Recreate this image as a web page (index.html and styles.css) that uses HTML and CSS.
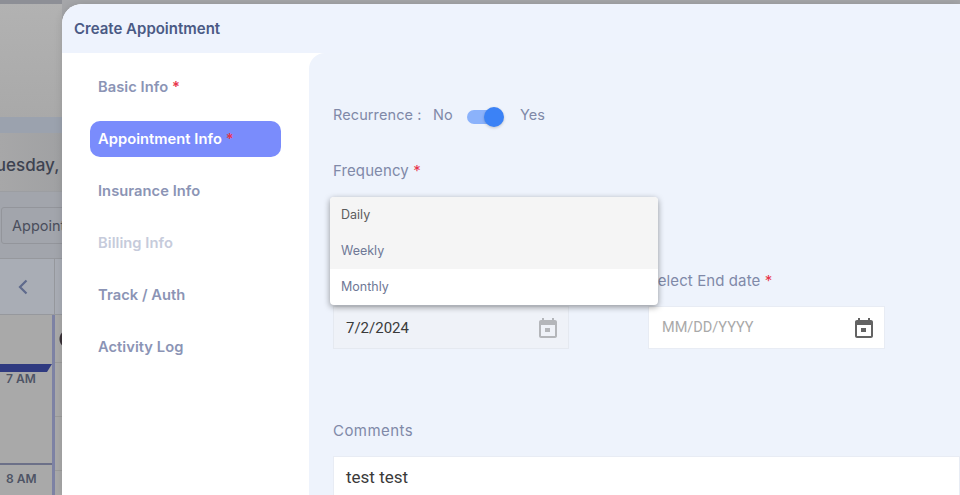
FILE: index.html
```html
<!DOCTYPE html>
<html lang="en">
<head>
<meta charset="utf-8">
<title>Create Appointment</title>
<link rel="stylesheet" href="styles.css">
</head>
<body>
<div class="backdrop">
  <div class="bd-top"></div>
  <div class="bd-band"></div>
  <div class="bd-date">Tuesday, July 2</div>
  <div class="bd-filter"><span class="bd-select">Appointments</span></div>
  <div class="bd-nav">
    <div class="bd-prev">
      <svg class="bd-chevron" width="14" height="18" viewBox="0 0 14 18"><path d="M10.5 2.5 4 9l6.500 6.500" fill="none" stroke="#5f6a8c" stroke-width="2.200"/></svg>
    </div>
  </div>
  <div class="bd-cal">
    <div class="bd-times">
      <div class="bd-head"></div>
      <div class="bd-flag"></div>
      <div class="bd-time bd-time-7">7 AM</div>
      <div class="bd-time bd-time-8">8 AM</div>
    </div>
    <div class="bd-col">
      <div class="bd-avatar"></div>
      <div class="bd-slot"></div>
      <div class="bd-slot"></div>
    </div>
  </div>
</div>

<div class="modal">
  <header class="modal-head">Create Appointment</header>
  <div class="modal-body">
    <nav class="tabs">
      <a class="tab">Basic Info <i class="req">*</i></a>
      <a class="tab tab-active">Appointment Info <i class="req">*</i></a>
      <a class="tab">Insurance Info</a>
      <a class="tab tab-disabled">Billing Info</a>
      <a class="tab">Track / Auth</a>
      <a class="tab">Activity Log</a>
    </nav>
    <main class="panel">
      <div class="recurrence">
        <span class="rec-label">Recurrence :</span>
        <span class="rec-no">No</span>
        <span class="switch"><span class="switch-track"></span><span class="switch-thumb"></span></span>
        <span>Yes</span>
      </div>
      <div class="field-label freq-label">Frequency <i class="req">*</i></div>
      <div class="freq-slot"></div>
      <div class="date-row">
        <div class="date-col">
          <div class="field-label">Select Start date <i class="req">*</i></div>
          <div class="date-input date-disabled">
            <span class="date-value">7/2/2024</span>
            <svg class="cal-icon" width="24" height="24" viewBox="0 0 24 24"><path fill="#b4b6ba" d="M19 3h-1V1h-2v2H8V1H6v2H5c-1.100 0-2 .9-2 2v14c0 1.100.9 2 2 2h14c1.100 0 2-.9 2-2V5c0-1.100-.9-2-2-2zm0 16H5V8h14v11zM9 11h5v4H9z" transform="translate(0 1)"/></svg>
          </div>
        </div>
        <div class="date-col date-col-end">
          <div class="field-label">Select End date <i class="req">*</i></div>
          <div class="date-input">
            <span class="date-placeholder">MM/DD/YYYY</span>
            <svg class="cal-icon" width="24" height="24" viewBox="0 0 24 24"><path fill="#636363" d="M19 3h-1V1h-2v2H8V1H6v2H5c-1.100 0-2 .9-2 2v14c0 1.100.9 2 2 2h14c1.100 0 2-.9 2-2V5c0-1.100-.9-2-2-2zm0 16H5V8h14v11zM9 11h5v4H9z" transform="translate(0 1)"/></svg>
          </div>
        </div>
      </div>
      <div class="field-label comments-label">Comments</div>
      <div class="comments">test test</div>

      <ul class="menu">
        <li class="menu-item menu-selected">Daily</li>
        <li class="menu-item menu-hover">Weekly</li>
        <li class="menu-item">Monthly</li>
      </ul>
    </main>
  </div>
</div>
</body>
</html>
```

FILE: styles.css
```css
* { box-sizing: border-box; }
html, body { margin: 0; height: 100%; overflow: hidden; }
body {
  position: relative;
  width: 960px;
  height: 495px;
  background: #a5a6a9;
  font-family: "Inter", "Liberation Sans", sans-serif;
}

/* dimmed page behind the modal */
.backdrop {
  display: flex;
  flex-direction: column;
  width: 62px;
  height: 495px;
  overflow: hidden;
  background: linear-gradient(90deg, #a7a7a8, #a0a1a3);
}
.bd-top { height: 117px; flex: none; background: linear-gradient(#8d8f96 0, #8d8f96 4px, #b2b2b2 4px, #a9a9a9 117px); }
.bd-band { height: 16px; flex: none; background: #9ba2ae; }
.bd-date {
  height: 59px;
  flex: none;
  padding-top: 21px;
  margin-left: -14px;
  width: 180px;
  font-size: 17px;
  font-weight: 500;
  color: #3d4250;
  white-space: nowrap;
  line-height: 22px;
  border-bottom: 1px solid #9c9ea2;
}
.bd-filter { height: 67px; flex: none; padding: 15px 0 0 1px; background: #a2a5ac; border-bottom: 1px solid #96989d; }
.bd-select {
  display: block;
  width: 90px;
  height: 37px;
  padding-left: 10px;
  border: 1px solid #93959b;
  border-radius: 3px;
  font-size: 14.500px;
  line-height: 35px;
  color: #4a4e5c;
  white-space: nowrap;
}
.bd-nav { height: 56px; flex: none; background: #a9adb5; border-bottom: 1px solid #96989d; }
.bd-prev { width: 55px; height: 55px; display: flex; align-items: center; justify-content: center; padding-right: 9px; border-right: 1px solid #96989d; }
.bd-cal { flex: 1; display: flex; background: #a9a9a9; }
.bd-times { position: relative; width: 55px; flex: none; border-right: 3px solid #7d82a4; }
.bd-head { height: 49px; }
.bd-flag {
  height: 8px;
  background: #2f3a80;
  clip-path: polygon(0 0, 100% 0, calc(100% - 5px) 100%, 0 100%);
}
.bd-time { position: absolute; left: 6px; font-size: 12px; font-weight: 600; color: #4e5465; line-height: 16px; }
.bd-time-7 { top: 56px; }
.bd-time-8 { top: 156px; }
.bd-times::after { content: ""; position: absolute; left: 0; right: 0; top: 148px; height: 2px; background: #6c7088; }
.bd-col { flex: 1; }
.bd-avatar { height: 48px; border-bottom: 1px solid #9b9b9b; background: radial-gradient(circle 10px at 14px 24px, #3a3238 9px, transparent 10px); }
.bd-slot { height: 54px; border-bottom: 1px solid #9b9b9b; }

/* modal */
.modal {
  position: absolute;
  left: 62px;
  top: 4px;
  width: 898px;
  height: 491px;
  display: flex;
  flex-direction: column;
  overflow: hidden;
  background: #fff;
  border-radius: 20px 0 0 0;
  color: #8089a8;
  box-shadow: 0 0 8px rgba(0,0,0,.12);
}
.modal-head {
  height: 49px;
  flex: none;
  padding: 15px 0 0 12px;
  background: #eef3fd;
  font-size: 15px;
  font-weight: 600;
  line-height: 20px;
  color: #4a5a85;
}
.modal-body { flex: 1; display: flex; min-height: 0; }
.tabs {
  width: 247px;
  flex: none;
  display: flex;
  flex-direction: column;
  gap: 16px;
  padding: 16px 28px 0;
}
.tab {
  display: block;
  height: 36px;
  padding-left: 8px;
  border-radius: 10px;
  font-size: 14.700px;
  font-weight: 600;
  letter-spacing: .05px;
  line-height: 36px;
  color: #8b94b5;
  white-space: nowrap;
}
.tab-active { background: #7a8cfc; color: #fff; }
.tab-disabled { color: #c6cbdb; }
.req { font-style: normal; color: #e8344a; }
.panel {
  position: relative;
  flex: 1;
  padding: 0 0 0 24px;
  background: #eef3fc;
  border-radius: 16px 0 0 0;
  font-size: 14.500px;
  font-weight: 400;
  color: #8089a8;
}
.recurrence { display: flex; align-items: center; height: 24px; margin-top: 49px; }
.rec-label { width: 100px; letter-spacing: .1px; }
.rec-no { width: 34px; }
.switch { position: relative; width: 37px; height: 20px; margin: 5px 16px 0 0; }
.switch-track { position: absolute; left: 0; top: 3px; width: 34px; height: 14px; border-radius: 7px; background: #8bb2fb; }
.switch-thumb { position: absolute; right: 0; top: 0; width: 20px; height: 20px; border-radius: 50%; background: #3b82f6; box-shadow: 0 1px 3px rgba(0,0,0,.2); }
.field-label { font-size: 15px; letter-spacing: .1px; line-height: 20px; color: #8089a8; white-space: nowrap; }
.freq-label { margin-top: 35px; }
.freq-slot { height: 90px; }
.date-row { display: flex; }
.date-col { width: 236px; }
.date-col-end { width: 237px; margin-left: 79px; }
.date-input {
  display: flex;
  align-items: center;
  justify-content: space-between;
  height: 43px;
  margin-top: 15px;
  padding: 0 8px 0 12px;
  background: #fff;
  border: 1px solid #e8ecf4;
}
.date-disabled { background: #eff2f8; border-color: #e5e9f0; }
.date-value { font-family: "Roboto", sans-serif; font-size: 15px; color: #3a3a3a; }
.date-placeholder { font-family: "Roboto", sans-serif; font-size: 14.500px; color: #a9a9a9; margin-left: 1px; }
.comments-label { margin-top: 72px; letter-spacing: .45px; }
.comments {
  height: 60px;
  margin-top: 15px;
  padding: 9px 12px;
  background: #fff;
  border: 1px solid #e8ecf4;
  font-family: "Roboto", sans-serif;
  font-size: 17px;
  line-height: 22px;
  color: #3a3a3a;
}

/* open dropdown over the form */
.menu {
  position: absolute;
  left: 21px;
  top: 144px;
  width: 328px;
  height: 108px;
  margin: 0;
  padding: 0;
  list-style: none;
  overflow: hidden;
  background: #fff;
  border-radius: 4px;
  box-shadow: 0 2px 6px rgba(0,0,0,.4);
}
.menu-item { height: 36px; padding-left: 11px; font-size: 12.500px; line-height: 36px; color: #6f7896; }
.menu-selected { background: #f5f5f5; color: #5c5c5c; }
.menu-hover { background: #f5f5f5; }
```
